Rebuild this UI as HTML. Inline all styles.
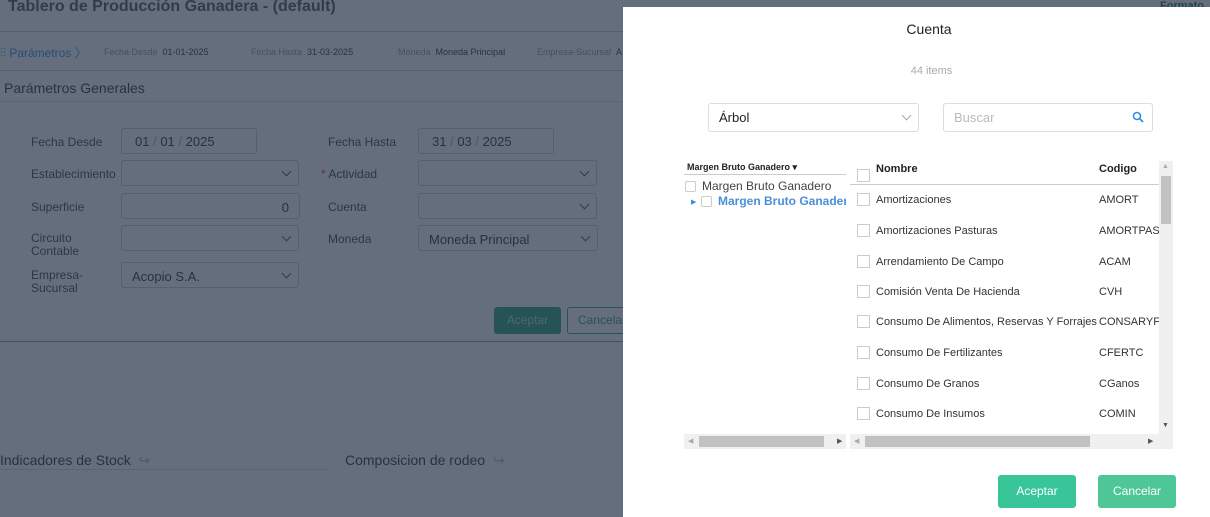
<!DOCTYPE html>
<html><head><meta charset="utf-8">
<style>
*{box-sizing:border-box;margin:0;padding:0}
body{width:1210px;height:517px;overflow:hidden;position:relative;background:#fff;font-family:"Liberation Sans",sans-serif;color:#333}
.a{position:absolute}
.lbl{font-size:12px;color:#444}
.inp{position:absolute;border:1px solid #ccc;border-radius:3px;background:#fff;height:26px;font-size:13px;color:#333}
.chev{position:absolute;right:8px;top:7px;width:7px;height:7px;border-right:1px solid #555;border-bottom:1px solid #555;transform:rotate(45deg)}
.ov{position:absolute;left:0;top:0;width:1210px;height:517px;background:rgba(36,48,68,0.7)}
.cb{position:absolute;width:13px;height:13px;border:1px solid #ccc;background:#fff}
.row{position:absolute;left:850px;width:309px;font-size:11px;color:#333}
.row .cb{left:7px;top:-7px}
.row .n{position:absolute;left:26px;top:-6px;white-space:nowrap}
.row .c{position:absolute;left:249px;top:-6px;width:60px;overflow:hidden;white-space:nowrap}
</style></head><body>
<!-- background page -->
<div class="a" style="left:8px;top:-2px;font-size:16px;font-weight:bold;color:#555">Tablero de Producción Ganadera - (default)</div>
<div class="a" style="left:0;top:31px;width:623px;height:1px;background:#ccc"></div>
<div class="a" style="left:0;top:44px;font-size:12px;color:#3a8ee6">⫶⫶ Parámetros 〉</div>
<div class="a" style="left:104px;top:47px;font-size:9px;color:#999">Fecha Desde <span style="color:#333">&nbsp;01-01-2025</span></div>
<div class="a" style="left:251px;top:47px;font-size:9px;color:#999">Fecha Hasta <span style="color:#333">&nbsp;31-03-2025</span></div>
<div class="a" style="left:398px;top:47px;font-size:9px;color:#999">Moneda <span style="color:#333">&nbsp;Moneda Principal</span></div>
<div class="a" style="left:537px;top:47px;font-size:9px;color:#999">Empresa-Sucursal <span style="color:#333">&nbsp;A</span></div>
<div class="a" style="left:0;top:70px;width:623px;height:1px;background:#ccc"></div>
<div class="a" style="left:4px;top:80px;font-size:14px;color:#333">Parámetros Generales</div>
<div class="a" style="left:0;top:101px;width:623px;height:1px;background:#ddd"></div>

<div class="a lbl" style="left:31px;top:135px">Fecha Desde</div>
<div class="inp" style="left:121px;top:128px;width:136px;padding:5px 13px;color:#333">01 <span style="color:#aaa">/</span> 01 <span style="color:#aaa">/</span> 2025</div>
<div class="a lbl" style="left:31px;top:167px">Establecimiento</div>
<div class="inp" style="left:121px;top:160px;width:178px"><div class="chev"></div></div>
<div class="a lbl" style="left:31px;top:200px">Superficie</div>
<div class="inp" style="left:121px;top:193px;width:179px;text-align:right;padding:6px 10px">0</div>
<div class="a lbl" style="left:31px;top:232px;line-height:13px">Circuito<br>Contable</div>
<div class="inp" style="left:121px;top:225px;width:178px"><div class="chev"></div></div>
<div class="a lbl" style="left:31px;top:269px;line-height:13px">Empresa-<br>Sucursal</div>
<div class="inp" style="left:121px;top:262px;width:178px;padding:6px 10px">Acopio S.A.<div class="chev"></div></div>

<div class="a lbl" style="left:328px;top:135px">Fecha Hasta</div>
<div class="inp" style="left:418px;top:128px;width:136px;padding:5px 13px">31 <span style="color:#aaa">/</span> 03 <span style="color:#aaa">/</span> 2025</div>
<div class="a lbl" style="left:321px;top:167px"><span style="color:#e33">*</span> Actividad</div>
<div class="inp" style="left:418px;top:160px;width:179px"><div class="chev"></div></div>
<div class="a lbl" style="left:328px;top:200px">Cuenta</div>
<div class="inp" style="left:418px;top:193px;width:179px"><div class="chev"></div></div>
<div class="a lbl" style="left:328px;top:232px">Moneda</div>
<div class="inp" style="left:418px;top:225px;width:180px;padding:6px 10px">Moneda Principal<div class="chev"></div></div>

<div class="a" style="left:494px;top:307px;width:67px;height:27px;background:#2ea37f;border-radius:3px;color:#b6e6d6;font-size:12px;text-align:center;line-height:27px">Aceptar</div>
<div class="a" style="left:567px;top:307px;width:70px;height:27px;border:1px solid #2ea37f;border-radius:3px;color:#2ea37f;font-size:12px;line-height:25px;padding-left:10px">Cancelar</div>
<div class="a" style="left:0;top:341px;width:623px;height:1px;background:#999"></div>
<div class="a" style="left:0;top:452px;font-size:14px;color:#333">Indicadores de Stock <span style="color:#bbb">&nbsp;↪</span></div>
<div class="a" style="left:0;top:469px;width:330px;height:1px;background:#ddd"></div>
<div class="a" style="left:345px;top:452px;font-size:14px;color:#333">Composicion de rodeo <span style="color:#bbb">&nbsp;↪</span></div>
<div class="a" style="left:1160px;top:0;font-size:11px;color:#1a7a5e;font-weight:bold">Formato</div>

<div class="ov"></div>

<!-- modal -->
<div class="a" style="left:623px;top:7px;width:587px;height:510px;background:#fff"></div>
<div class="a" style="left:623px;top:21px;width:611px;text-align:center;font-size:14px;color:#222;width:612px">Cuenta</div>
<div class="a" style="left:623px;top:65px;width:617px;text-align:center;font-size:11px;color:#aaa">44 items</div>
<div class="inp" style="left:708px;top:103px;width:211px;height:29px;border-color:#ddd;padding:6px 10px;font-size:13px;color:#222">Árbol<div class="chev" style="top:8px;border-color:#9ab"></div></div>
<div class="inp" style="left:943px;top:103px;width:210px;height:29px;border-color:#ddd;padding:6px 10px;font-size:13px;color:#bbb">Buscar
<svg class="a" style="right:8px;top:7px" width="12" height="12" viewBox="0 0 12 12"><circle cx="5" cy="5" r="3.5" fill="none" stroke="#2d8ee8" stroke-width="1.6"/><path d="M7.5 7.5L11 11" stroke="#2d8ee8" stroke-width="1.8"/></svg></div>

<!-- tree -->
<div class="a" style="left:687px;top:162px;font-size:9px;font-weight:bold;color:#222">Margen Bruto Ganadero ▾</div>
<div class="a" style="left:684px;top:174px;width:162px;height:1px;background:#ccc"></div>
<div class="cb" style="left:685px;top:181px;width:11px;height:11px;border-radius:2px"></div>
<div class="a" style="left:702px;top:179px;font-size:12px;color:#444">Margen Bruto Ganadero</div>
<div class="a" style="left:691px;top:198px;font-size:7px;color:#3a8ee6">▶</div>
<div class="cb" style="left:701px;top:196px;width:11px;height:11px;border-radius:2px"></div>
<div class="a" style="left:718px;top:194px;width:128px;overflow:hidden;white-space:nowrap;font-size:12px;font-weight:bold;color:#4a90d9">Margen Bruto Ganadero</div>
<div class="a" style="left:684px;top:434px;width:162px;height:15px;background:#f0f0f0"></div>
<div class="a" style="left:699px;top:436px;width:125px;height:11px;background:#c1c1c1"></div>
<div class="a" style="left:688px;top:437px;font-size:7px;color:#aaa">◀</div>
<div class="a" style="left:837px;top:437px;font-size:7px;color:#555">▶</div>

<!-- grid -->
<div class="cb" style="left:857px;top:169px"></div>
<div class="a" style="left:876px;top:163px;font-size:11px;font-weight:bold;color:#222">Nombre</div>
<div class="a" style="left:1099px;top:163px;font-size:11px;font-weight:bold;color:#222">Codigo</div>
<div class="a" style="left:850px;top:184px;width:309px;height:1px;background:#ccc"></div>
<div class="row" style="top:200px"><div class="cb"></div><div class="n">Amortizaciones</div><div class="c">AMORT</div></div>
<div class="row" style="top:231px"><div class="cb"></div><div class="n">Amortizaciones Pasturas</div><div class="c">AMORTPAS</div></div>
<div class="row" style="top:262px"><div class="cb"></div><div class="n">Arrendamiento De Campo</div><div class="c">ACAM</div></div>
<div class="row" style="top:292px"><div class="cb"></div><div class="n">Comisión Venta De Hacienda</div><div class="c">CVH</div></div>
<div class="row" style="top:322px"><div class="cb"></div><div class="n">Consumo De Alimentos, Reservas Y Forrajes</div><div class="c">CONSARYF</div></div>
<div class="row" style="top:353px"><div class="cb"></div><div class="n">Consumo De Fertilizantes</div><div class="c">CFERTC</div></div>
<div class="row" style="top:384px"><div class="cb"></div><div class="n">Consumo De Granos</div><div class="c">CGanos</div></div>
<div class="row" style="top:414px"><div class="cb"></div><div class="n">Consumo De Insumos</div><div class="c">COMIN</div></div>
<div class="a" style="left:1159px;top:161px;width:14px;height:273px;background:#f0f0f0"></div>
<div class="a" style="left:1161px;top:176px;width:10px;height:48px;background:#c1c1c1"></div>
<div class="a" style="left:1162px;top:163px;font-size:7px;color:#aaa">▲</div>
<div class="a" style="left:1162px;top:422px;font-size:7px;color:#555">▼</div>
<div class="a" style="left:850px;top:434px;width:323px;height:15px;background:#f0f0f0"></div>
<div class="a" style="left:865px;top:436px;width:225px;height:11px;background:#c1c1c1"></div>
<div class="a" style="left:854px;top:437px;font-size:7px;color:#aaa">◀</div>
<div class="a" style="left:1148px;top:437px;font-size:7px;color:#555">▶</div>

<div class="a" style="left:998px;top:475px;width:78px;height:33px;background:#38c597;border-radius:3px;color:#fff;font-size:12px;text-align:center;line-height:33px">Aceptar</div>
<div class="a" style="left:1098px;top:475px;width:78px;height:33px;background:#4ec695;border-radius:3px;color:#fff;font-size:12px;text-align:center;line-height:33px">Cancelar</div>
</body></html>
